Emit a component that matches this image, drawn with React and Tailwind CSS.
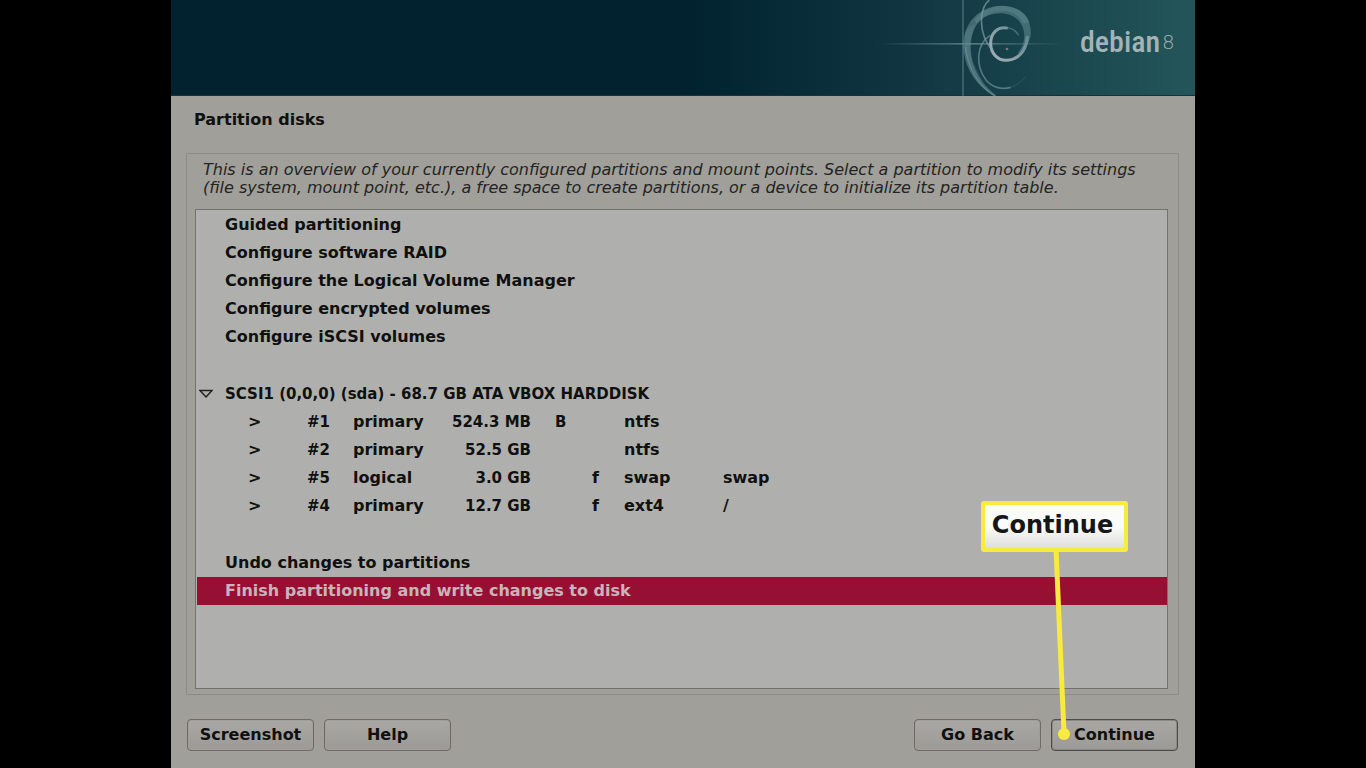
import { useState } from "react";

const guidedActions = [
  "Guided partitioning",
  "Configure software RAID",
  "Configure the Logical Volume Manager",
  "Configure encrypted volumes",
  "Configure iSCSI volumes",
];

const finalActions = [
  "Undo changes to partitions",
  "Finish partitioning and write changes to disk",
];

const partitions = [
  { id: "#1", type: "primary", size: "524.3 MB", boot: "B", flag: "", fs: "ntfs", mount: "" },
  { id: "#2", type: "primary", size: "52.5 GB", boot: "", flag: "", fs: "ntfs", mount: "" },
  { id: "#5", type: "logical", size: "3.0 GB", boot: "", flag: "f", fs: "swap", mount: "swap" },
  { id: "#4", type: "primary", size: "12.7 GB", boot: "", flag: "f", fs: "ext4", mount: "/" },
];

function Swirl() {
  return (
    <svg
      className="h-24 w-[204px] shrink-0"
      viewBox="0 0 612 288"
      fill="none"
      aria-hidden="true"
    >
      <defs>
        <linearGradient id="beam" x1="50" y1="0" x2="610" y2="0" gradientUnits="userSpaceOnUse">
          <stop offset="0" stopColor="#7fa3ab" stopOpacity="0" />
          <stop offset="0.5" stopColor="#7fa3ab" stopOpacity="0.6" />
          <stop offset="1" stopColor="#7fa3ab" stopOpacity="0" />
        </linearGradient>
        <linearGradient id="ring" x1="390" y1="180" x2="500" y2="80" gradientUnits="userSpaceOnUse">
          <stop offset="0" stopColor="#a9b3b8" />
          <stop offset="1" stopColor="#5c858c" />
        </linearGradient>
      </defs>
      <rect x="50" y="129" width="560" height="5" fill="url(#beam)" />
      <path d="M309 0V288" stroke="#6d919a" strokeOpacity="0.5" strokeWidth="5" />
      {/* thick brush stroke from the ring over the top and down the left */}
      <path
        d="M512 104C516 54 484 17 424 17C362 17 310 66 310 136C311 200 346 256 402 288L410 288C362 250 334 206 331 148C330 96 350 60 386 46C436 28 484 48 492 96C496 124 486 146 470 164C496 150 510 126 512 104Z"
        fill="#5f8890"
        fillOpacity="0.6"
      />
      <path
        d="M350 72C370 44 400 34 430 32C460 34 480 48 490 72L508 66C498 36 466 18 424 18C392 18 362 34 342 60Z"
        fill="#6f959c"
        fillOpacity="0.3"
      />
      <path
        d="M318 92C306 144 322 204 372 252C360 226 344 202 338 180C330 144 330 112 350 72C336 76 326 82 318 92Z"
        fill="#6f959c"
        fillOpacity="0.25"
      />
      {/* inner ring */}
      <path
        d="M440 84C410 80 392 102 392 130C392 160 412 181 438 181C472 181 498 156 502 112"
        stroke="url(#ring)"
        strokeWidth="9"
        strokeLinecap="round"
      />
      <path d="M438 83C456 84 468 92 476 106" stroke="#6d919a" strokeOpacity="0.6" strokeWidth="4" />
      {/* fine strands */}
      <path d="M388 0C360 22 360 76 372 108C378 126 388 140 398 152" stroke="#7c9ea6" strokeOpacity="0.7" strokeWidth="5" />
      <path d="M390 106C348 134 346 198 378 240C396 262 424 270 452 262" stroke="#7c9ea6" strokeOpacity="0.6" strokeWidth="5" />
      <path d="M452 262C470 256 486 244 496 230" stroke="#7c9ea6" strokeOpacity="0.2" strokeWidth="3" />
      <path d="M316 140C322 200 352 254 404 288" stroke="#7c9ea6" strokeOpacity="0.5" strokeWidth="4" />
      <circle cx="441" cy="147" r="4" fill="#7a7782" />
    </svg>
  );
}

function Header() {
  return (
    <header className="h-24 shrink-0 flex justify-end bg-linear-to-r from-[#01222e] from-50% via-[#113642] via-72% to-[#23565a] border-b border-[#16333a]">
      <Swirl />
      <div className="ml-4 flex w-[115px] items-start gap-0.5 text-[#a3b3b6]">
        <span className="mt-6 font-['Roboto_Condensed','DejaVu_Sans_Condensed',sans-serif] text-[30px] leading-9 font-medium">
          debian
        </span>
        <span className="mt-8 font-['DejaVu_Sans',sans-serif] text-xl leading-5 font-extralight">
          8
        </span>
      </div>
    </header>
  );
}

function ActionRow({ label, selected, onSelect }) {
  return (
    <button
      type="button"
      onClick={() => onSelect(label)}
      className={`block w-full h-7 pl-7 text-left ${
        selected ? "bg-[#980f34] text-[#c9b4ba]" : ""
      }`}
    >
      {label}
    </button>
  );
}

function DialogButton({ children, focused }) {
  return (
    <button
      type="button"
      className={`w-[127px] h-8 rounded-[4px] border bg-linear-to-b from-[#aaa8a4] to-[#9c9a96] ${
        focused
          ? "border-[#4e4c48] shadow-[inset_0_0_0_1px_#8a8883]"
          : "border-[#6e6b66] shadow-[inset_0_0_0_1px_#a09e99]"
      }`}
    >
      {children}
    </button>
  );
}

function Callout() {
  return (
    <div className="pointer-events-none absolute right-0 bottom-0">
      <svg
        className="absolute right-[107px] bottom-[10px] h-[192px] w-5"
        viewBox="0 0 20 192"
        aria-hidden="true"
      >
        <path d="M5 0L13 184" stroke="#f8ea3f" strokeWidth="5" />
        <circle cx="13" cy="185" r="6" fill="#f8ea3f" />
      </svg>
      <div className="absolute right-[50px] bottom-[199px] flex h-[51px] w-[147px] items-center justify-center rounded-[3px] border-4 border-[#f8ea3f] bg-linear-to-b from-[#fbfbfa] from-50% to-[#dededa] pr-1 pb-1 text-2xl text-[#161616]">
        Continue
      </div>
    </div>
  );
}

function App() {
  const [selected, setSelected] = useState(finalActions[1]);
  const [expanded, setExpanded] = useState(true);

  return (
    <div className="min-h-screen bg-black font-['DejaVu_Sans',sans-serif] text-base leading-7 font-bold text-[#101010]">
      <div className="mx-auto flex min-h-screen max-w-5xl flex-col bg-[#a09f99]">
        <Header />

        <main className="flex flex-1 flex-col pr-4 pb-[17px] pl-[15px]">
          <h1 className="mt-[10px] px-2">Partition disks</h1>

          <section className="mt-[19px] flex flex-1 flex-col border border-[#8c8b84] px-2 pt-[7px] pb-[5px]">
            <p className="px-2 pb-3 text-base leading-[18px] font-normal text-[#242424] italic">
              This is an overview of your currently configured partitions and
              mount points. Select a partition to modify its settings (file
              system, mount point, etc.), a free space to create partitions, or
              a device to initialize its partition table.
            </p>

            <div className="mr-0.5 flex-1 border border-[#73726c] bg-[#afb0ad] pt-px pl-px">
              {guidedActions.map((label) => (
                <ActionRow
                  key={label}
                  label={label}
                  selected={selected === label}
                  onSelect={setSelected}
                />
              ))}

              <button
                type="button"
                aria-expanded={expanded}
                onClick={() => setExpanded(!expanded)}
                className="mt-[29px] flex h-7 w-full items-center gap-3 pl-0.5 text-left text-[15px]"
              >
                <svg className="h-3 w-[14px]" viewBox="0 0 14 12" fill="none" aria-hidden="true">
                  <path d="M1 2.5H13L7 9Z" stroke="#20201f" strokeWidth="1.4" />
                </svg>
                SCSI1 (0,0,0) (sda) - 68.7 GB ATA VBOX HARDDISK
              </button>

              {expanded && (
                <table className="w-full table-fixed">
                  <colgroup>
                    <col className="w-[110px]" />
                    <col className="w-[46px]" />
                    <col className="w-[88px]" />
                    <col className="w-[90px]" />
                    <col className="w-[61px]" />
                    <col className="w-8" />
                    <col className="w-[99px]" />
                    <col />
                  </colgroup>
                  <tbody>
                    {partitions.map((part) => (
                      <tr key={part.id} className="h-7">
                        <td className="pl-[51px]">&gt;</td>
                        <td className="text-[15px]">{part.id}</td>
                        <td>{part.type}</td>
                        <td className="text-right text-[15px] whitespace-nowrap">{part.size}</td>
                        <td className="pl-6 text-[15px]">{part.boot}</td>
                        <td>{part.flag}</td>
                        <td>{part.fs}</td>
                        <td>{part.mount}</td>
                      </tr>
                    ))}
                  </tbody>
                </table>
              )}

              <div className="mt-[29px]">
                {finalActions.map((label) => (
                  <ActionRow
                    key={label}
                    label={label}
                    selected={selected === label}
                    onSelect={setSelected}
                  />
                ))}
              </div>
            </div>
          </section>

          <footer className="mt-6 flex justify-between px-px">
            <div className="flex gap-[10px]">
              <DialogButton>Screenshot</DialogButton>
              <DialogButton>Help</DialogButton>
            </div>
            <div className="relative flex gap-[10px]">
              <DialogButton>Go Back</DialogButton>
              <DialogButton focused>Continue</DialogButton>
              <Callout />
            </div>
          </footer>
        </main>
      </div>
    </div>
  );
}

export default App;
